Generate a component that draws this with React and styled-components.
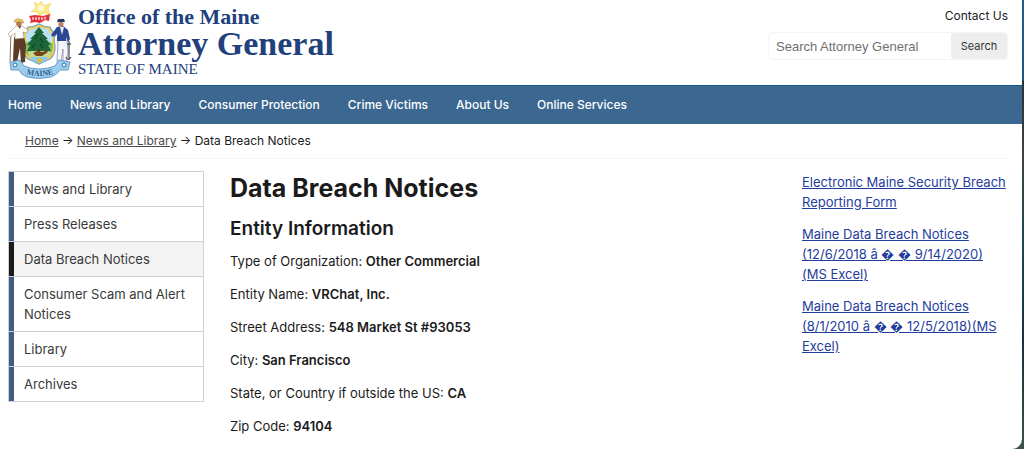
import React from "react";
import styled, { createGlobalStyle, css } from "styled-components";

const GlobalStyle = createGlobalStyle`
  *, *::before, *::after { box-sizing: border-box; }
  body {
    margin: 0;
    background: linear-gradient(#1c6187 0, #1c5a80 80px, #2a3236 81px, #3c4542 160px, #1d4a50 240px, #16333d 340px, #3b5348 100%);
    color: #1b1b1b;
    font: 13px/20px Inter, "Liberation Sans", sans-serif;
  }
  h1, h2, p, ul, ol { margin: 0; padding: 0; }
  ul, ol { list-style: none; }
`;

const Page = styled.div`
  min-height: 100vh;
  margin-right: 2px;
  background: #fff;
  border-bottom-right-radius: 10px;
`;

const Header = styled.header`
  display: flex;
  justify-content: space-between;
  padding: 0 14px 0 8px;
  height: 85px;
`;

const Brand = styled.a`
  display: flex;
  gap: 6px;
  color: #21407c;
  text-decoration: none;
  font-family: "Liberation Serif", serif;
`;

const SealImage = styled.svg`
  width: 64px;
  height: 80px;
`;

const BrandText = styled.span`
  display: flex;
  flex-direction: column;
  padding-top: 6px;
`;

const BrandLine = styled.span`
  font-size: ${(p) => p.$size}px;
  line-height: ${(p) => p.$line}px;
  font-weight: ${(p) => (p.$bold ? 700 : 400)};
  white-space: nowrap;
`;

const Tools = styled.div`
  display: flex;
  flex-direction: column;
  align-items: flex-end;
  padding-top: 6px;
`;

const ContactLink = styled.a`
  font-size: 12px;
  line-height: 20px;
  color: #1b1b1b;
  text-decoration: none;
`;

const SearchForm = styled.form`
  display: flex;
  width: 240px;
  margin-top: 6px;
  padding: 0 0 0 1px;
  border: 1px solid #f5f5f5;
  border-radius: 4px;
`;

const SearchInput = styled.input`
  flex: 1;
  min-width: 0;
  height: 26px;
  padding: 0 6px;
  border: 0;
  background: none;
  font: 13px "Liberation Sans", sans-serif;
  &::placeholder { color: #707070; opacity: 1; }
`;

const SearchButton = styled.button`
  width: 56px;
  border: 0;
  border-radius: 3px;
  background: #eee;
  color: #333;
  font: 11px Inter, sans-serif;
`;

const NavBar = styled.nav`
  border-top: 1px solid #125a8c;
  background: #3b6790;
`;

const NavList = styled.ul`
  display: flex;
  gap: 28px;
  padding: 9px 8px;
  font-size: 12px;
`;

const NavLink = styled.a`
  color: #fff;
  font-weight: 500;
  text-decoration: none;
`;

const Breadcrumb = styled.nav`
  margin: 0 14px 0 8px;
  padding: 7px 17px;
  border-bottom: 1px solid #f5f5f5;
  font-size: 12px;
  a { color: #4a4a4a; }
`;

const Columns = styled.div`
  display: grid;
  grid-template-columns: 196px 1fr 206px;
  column-gap: 26px;
  align-items: start;
  padding: 12px 14px 12px 8px;
`;

const SideList = styled.ul`
  border: 1px solid #cdd0d4;
  border-width: 1px 1px 0 1px;
`;

const SideLink = styled.a`
  display: block;
  padding: 7px 10px 7px 15px;
  border-bottom: 1px solid #cdd0d4;
  color: #3a3a3a;
  text-decoration: none;
  box-shadow: inset 5px 0 #3f5c86;
  ${(p) => p.$current && css`
    background: #f3f3f3;
    box-shadow: inset 5px 0 #1b1b1b;
  `}
`;

const Title = styled.h1`
  font-size: 25px;
  line-height: 34px;
  font-weight: 700;
`;

const SubTitle = styled.h2`
  margin-top: 12px;
  font-size: 19px;
  line-height: 24px;
  font-weight: 600;
`;

const Facts = styled.div`
  display: grid;
  gap: 13px;
  margin-top: 10px;
  strong { font-weight: 600; }
`;

const Downloads = styled.ul`
  display: grid;
  gap: 12px;
  padding-top: 1px;
  a { color: #1f3d9c; }
`;

const Ribbon = styled.text`
  font: 700 8px "Liberation Serif", serif;
  fill: #2f5f8e;
`;

const Seal = () => (
  <SealImage viewBox="0 0 64 80" aria-hidden="true">
    {/* north star and motto */}
    <path d="M33 1l3 5 7-3-3 6 3 6-7-2-5 3-1-4-7 0 5-4-2-6 5 3z" fill="#fbe98a" stroke="#efd75c" strokeWidth=".6" />
    <circle cx="33" cy="8" r="3" fill="#fffbd8" />
    <path d="M21 16l6-1 8 1 7-2-1 7-4-1-5 3-5-1-5 1 1-3z" fill="#e0313c" />
    <path d="M24 18.500h2m1 0h2m1 0h2m1 0h2m1-.5h2" stroke="#f9b9b4" strokeWidth="2.400" />
    {/* scrolled border */}
    <path d="M31 24q5 3 11 3 2 5 6 7-3 5-1 11 1 9-5 14l-11 5-11-5q-6-5-5-14 2-6-1-11 4-2 6-7 6 0 11-3z" fill="#f2cc4a" stroke="#74a8cf" strokeWidth="1.200" />
    <path d="M31 27q5 2 9 2 2 4 5 6-2 6-1 11 0 7-4 11l-9 4-9-4q-4-4-4-11 1-5-1-11 3-2 5-6 4 0 9-2z" fill="#b9e1f3" />
    <path d="M16 44q6-4 15-3 9-1 14 3 0 9-5 13H22q-6-4-6-13z" fill="#7fba5b" />
    <path d="M20 52q11-4 23 0-1 4-3 6H22z" fill="#c8d98b" />
    {/* pine */}
    <path d="M31 27l5 6-2 0 6 6-2 0 5 6-3 0 3 6H19l3-6-3 0 5-6-2 0 6-6-2 0z" fill="#1e6638" />
    <path d="M30 34l-3 5m5-1l3 5m-8 1l-3 4m8-4l3 4" stroke="#0e4427" strokeWidth="1.200" />
    <path d="M31 49v3" stroke="#573a20" strokeWidth="2" />
    {/* moose */}
    <path d="M25 53l4-2 6 1 4-2 1 2-3 2-3 2h-6z" fill="#74491f" />
    <path d="M22 57h18l-2 4-7 2-7-2z" fill="#8cc5e4" />
    <path d="M28 60l3-2 4 2-3 3z" fill="#e2bd2d" />
    {/* farmer */}
    <path d="M3 31l-1 31" stroke="#8b715a" strokeWidth="1" />
    <path d="M6 37h10l2 8-1 17-4 1-1-15-3 14-4-1z" fill="#5e3a27" />
    <path d="M8 26l6 0 6 4-2 3-3-1 1 6-9 1 0-6-5 4-2-3z" fill="#fff" stroke="#a9988c" strokeWidth=".7" />
    <circle cx="11" cy="23.500" r="2.800" fill="#bb7750" />
    <path d="M6 22q1-4 5-3 4 0 5 4-5-2-10-1z" fill="#eccb52" stroke="#a87931" strokeWidth=".5" />
    <path d="M10 26l2 3 1-3z" fill="#7a4128" />
    {/* sailor */}
    <path d="M50 40h9l1 12-2 10-3 0 0-13-2 13-4 0z" fill="#f5f6fb" stroke="#8a91a8" strokeWidth=".8" />
    <path d="M49 27l6-1 5 4 2 9-2 3-2-5 0 4-9 0 0-7-4 3-2-2z" fill="#2c4791" />
    <path d="M52 27l2 8 2-8z" fill="#e6ecfa" />
    <circle cx="53" cy="24" r="2.600" fill="#bd8061" />
    <path d="M49 22l1-3 6 0 1 3z" fill="#263a68" />
    <path d="M61 41v19m-3-3q2 5 5 0m-4-13h4" fill="none" stroke="#54565d" strokeWidth="1.300" />
    {/* name ribbon */}
    <path d="M2 62l10-2 4 6q15 6 31 0l4-6 11 2-2 8-8 0q-3 5-9 7-12 3-24 0-6-2-8-7l-8 0z" fill="#9dcdec" stroke="#4f8bb9" strokeWidth=".8" />
    <circle cx="7" cy="65" r="2" fill="#e6f4fb" stroke="#36709f" />
    <circle cx="56" cy="65" r="2" fill="#e6f4fb" stroke="#36709f" />
    <path id="ribbon-line" d="M15 73q16 6 34 0" fill="none" />
    <Ribbon textAnchor="middle"><textPath href="#ribbon-line" startOffset="50%">MAINE</textPath></Ribbon>
  </SealImage>
);

const navItems = ["Home", "News and Library", "Consumer Protection", "Crime Victims", "About Us", "Online Services"];
const sideItems = ["News and Library", "Press Releases", "Data Breach Notices", "Consumer Scam and Alert Notices", "Library", "Archives"];
const facts = [
  ["Type of Organization", "Other Commercial"],
  ["Entity Name", "VRChat, Inc."],
  ["Street Address", "548 Market St #93053"],
  ["City", "San Francisco"],
  ["State, or Country if outside the US", "CA"],
  ["Zip Code", "94104"],
];
const downloads = [
  "Electronic Maine Security Breach Reporting Form",
  "Maine Data Breach Notices (12/6/2018 â � � 9/14/2020) (MS Excel)",
  "Maine Data Breach Notices (8/1/2010 â � � 12/5/2018)(MS Excel)",
];

export default function App() {
  return (
    <>
      <GlobalStyle />
      <Page>
        <Header>
          <Brand href="#">
            <Seal />
            <BrandText>
              <BrandLine $size={22} $line={22} $bold>Office of the Maine</BrandLine>
              <BrandLine $size={34} $line={32} $bold>Attorney General</BrandLine>
              <BrandLine $size={15} $line={18}>STATE OF MAINE</BrandLine>
            </BrandText>
          </Brand>
          <Tools>
            <ContactLink href="#">Contact Us</ContactLink>
            <SearchForm>
              <SearchInput type="text" aria-label="Search Attorney General" placeholder="Search Attorney General" />
              <SearchButton type="button">Search</SearchButton>
            </SearchForm>
          </Tools>
        </Header>
        <NavBar>
          <NavList>
            {navItems.map((t) => <li key={t}><NavLink href="#">{t}</NavLink></li>)}
          </NavList>
        </NavBar>
        <Breadcrumb aria-label="Breadcrumb">
          <a href="#">Home</a> → <a href="#">News and Library</a> → Data Breach Notices
        </Breadcrumb>
        <Columns>
          <SideList>
            {sideItems.map((t) => (
              <li key={t}><SideLink href="#" $current={t === "Data Breach Notices"}>{t}</SideLink></li>
            ))}
          </SideList>
          <main>
            <Title>Data Breach Notices</Title>
            <SubTitle>Entity Information</SubTitle>
            <Facts>
              {facts.map(([k, v]) => <p key={k}>{k}: <strong>{v}</strong></p>)}
            </Facts>
          </main>
          <Downloads>
            {downloads.map((t) => <li key={t}><a href="#">{t}</a></li>)}
          </Downloads>
        </Columns>
      </Page>
    </>
  );
}
